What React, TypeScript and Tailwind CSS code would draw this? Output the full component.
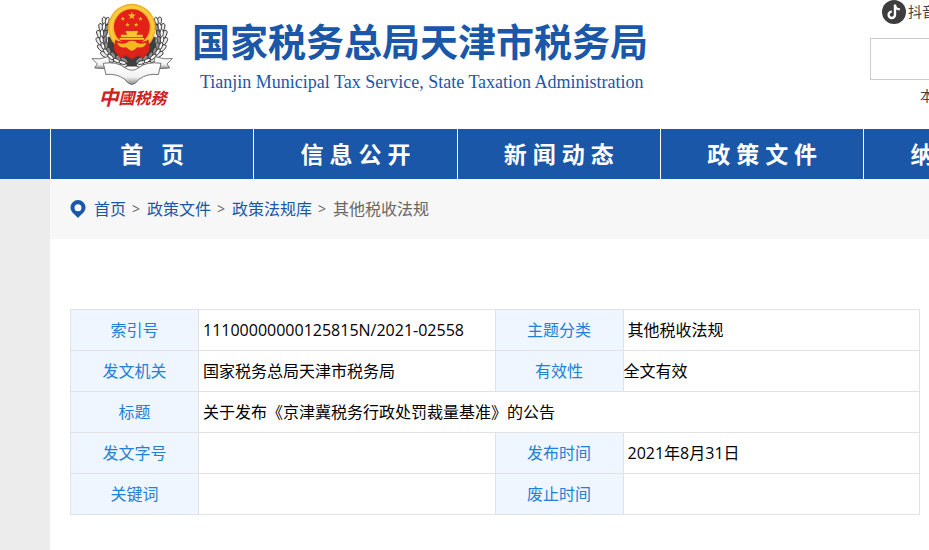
import { Fragment, type ReactNode } from "react"

// ─── Constants ───────────────────────────────────────────────────────────────
const NAV_ITEMS = [
  "首\u00a0\u00a0\u00a0页",
  "信 息 公 开",
  "新 闻 动 态",
  "政 策 文 件",
  "纳 税 服 务",
  "互 动 交 流",
]

const CRUMBS = ["首页", "政策文件", "政策法规库"]

// x, y, rotation of each ear on the left half of the wreath
const LEAVES = [
  [82, 62, 16],
  [72, 80, 8],
  [66, 99, 0],
  [65, 119, -8],
  [69, 138, -20],
  [78, 156, -34],
  [92, 171, -48],
  [110, 182, -62],
  [128, 188, -76],
]

const SMALL_STARS = [
  [129, 56],
  [182, 56],
  [143, 74],
  [169, 74],
]

// ─── Icons ───────────────────────────────────────────────────────────────────
function Wreath() {
  return (
    <g stroke="#2f2f2f" strokeWidth="2.500">
      {LEAVES.map(([x, y, r]) => (
        <g key={y} transform={`translate(${x} ${y}) rotate(${r})`}>
          <ellipse cx="-9" rx="6.500" ry="13" fill="#e8e8e8" transform="rotate(-24)" />
          <ellipse cx="9" rx="6.500" ry="13" fill="#8c8c8c" transform="rotate(24)" />
          <ellipse rx="5" ry="11" fill="#fbfbfb" />
        </g>
      ))}
    </g>
  )
}

function Star({ x, y, s }: { x: number; y: number; s: number }) {
  return (
    <path
      transform={`translate(${x} ${y}) scale(${s})`}
      d="M0-4 1-1.200 4-1.200 1.600.6 2.500 3.400 0 1.700-2.500 3.400-1.600.6-4-1.200-1-1.200Z"
      fill="#f9bd2c"
    />
  )
}

function Emblem() {
  return (
    <svg viewBox="33 6 250 252" className="h-[84px] w-[83px]" aria-hidden="true">
      <defs>
        <linearGradient id="silver" x1="0" x2="0" y1="0" y2="1">
          <stop offset="0" stopColor="#ffffff" />
          <stop offset="0.65" stopColor="#f3f3f3" />
          <stop offset="1" stopColor="#8a8a8a" />
        </linearGradient>
        <radialGradient id="gold">
          <stop offset="0.7" stopColor="#f0a818" />
          <stop offset="0.88" stopColor="#fcd045" />
          <stop offset="1" stopColor="#e9a51c" />
        </radialGradient>
      </defs>
      <path d="M84 110h144v60l-30 30h-84l-30-30Z" fill="#3f3f3f" />
      <Wreath />
      <g transform="translate(312 0) scale(-1 1)">
        <Wreath />
      </g>
      {/* red drapery under the ring */}
      <path d="M104 130h104v24l-16 20-18-6-18 10-18-10-18 6-16-20Z" fill="#d8201a" />
      <circle cx="156" cy="83" r="72" fill="url(#gold)" />
      <circle cx="156" cy="81" r="54" fill="#e32119" />
      <Star x={156} y={47} s={3} />
      {SMALL_STARS.map(([x, y]) => (
        <Star key={x} x={x} y={y} s={1.7} />
      ))}
      <path d="M138 93h36v6h-3v5h18v8h-66v-8h18v-5h-3ZM119 114h74v5h-74Z" fill="#fbc52e" />
      <path
        d="M106 118q8 10 50 10t50-10l4 26-18 24-18-6-18 12-18-12-18 6-18-24Z"
        fill="#dc241a"
      />
      <path
        d="M112 128q26 8 34-4 10-4 20 0 8 12 34 4-6 18-28 14-8 10-16 10t-16-10q-22 4-28-14Z"
        fill="#f6b822"
      />
      {/* ribbon */}
      <g stroke="#5c5c5c" strokeWidth="2.500" strokeLinejoin="round">
        <path d="M36 176q22 4 50-6l6 34q-20 4-48 0l8-12Z" fill="url(#silver)" />
        <path d="M278 176q-24 4-52-6l-6 34q22 4 50 0l-8-12Z" fill="url(#silver)" />
        <path
          d="M70 190q42-6 66 14 10 7 20 7t20-7q24-20 68-14l-8 34q-34-4-58 14-12 16-22 16t-22-16q-24-18-56-14Z"
          fill="url(#silver)"
        />
      </g>
    </svg>
  )
}

function PinIcon() {
  return (
    <svg viewBox="0 0 16 18" className="h-[18px] w-4 shrink-0" aria-hidden="true">
      <path
        fillRule="evenodd"
        d="M8 0a7.500 7.500 0 0 0-7.500 7.500c0 4.500 4.500 7 7.500 10.500 3-3.500 7.500-6 7.500-10.500A7.500 7.500 0 0 0 8 0Zm0 4.300a3.500 3.500 0 1 1 0 7 3.500 3.500 0 0 1 0-7Z"
        fill="#1a57a8"
      />
    </svg>
  )
}

function DouyinIcon() {
  return (
    <svg viewBox="0 0 24 24" className="size-6 shrink-0" aria-hidden="true">
      <circle cx="12" cy="12" r="12" fill="#3d3d3d" />
      <path
        d="M13 4.500v10.300a3.200 3.200 0 1 1-3.200-3.200M13 5c.2 2.500 2.100 4.300 4.900 4.400"
        fill="none"
        stroke="#fff"
        strokeWidth="2.400"
      />
    </svg>
  )
}

// ─── Sub-components ──────────────────────────────────────────────────────────
function LabelCell({ children }: { children: ReactNode }) {
  return (
    <th
      scope="row"
      className="h-[41px] border border-[#e2e2e2] bg-[#eff6ff] text-center font-normal text-[#2380d8]"
    >
      {children}
    </th>
  )
}

function ValueCell({ children }: { children?: ReactNode }) {
  return <td className="border border-[#e2e2e2] px-1">{children}</td>
}

function Header() {
  return (
    <header className="flex h-[129px] w-[1220px] shrink-0 items-start">
      <div className="ml-[41px] flex w-[83px] flex-col items-center pt-0.5">
        <Emblem />
        <p className="flex items-center text-base leading-6 font-bold text-[#d0201c] italic">
          <span className="text-xl leading-6">中</span>國税務
        </p>
      </div>

      <div className="ml-[18px] pt-4 text-[#1a57a8]">
        <h1 className="text-[38px] leading-[50px] font-bold">
          国家税务总局天津市税务局
        </h1>
        <p className="pt-1 pl-2 font-['Liberation_Serif',serif] text-lg leading-6">
          Tianjin Municipal Tax Service, State Taxation Administration
        </p>
      </div>

      {/* Social link + search */}
      <div className="ml-auto w-[400px] text-sm text-[#444]">
        <a href="#douyin" className="flex h-[23px] items-center gap-0.5 pl-3">
          <DouyinIcon />
          抖音
        </a>
        <input
          type="text"
          aria-label="搜索"
          className="mt-[15px] block h-[42px] w-full border border-[#ccc] bg-white px-3 outline-none"
        />
        <p className="mt-1 pl-[50px] leading-6">本站热词：</p>
      </div>
    </header>
  )
}

function Breadcrumb() {
  return (
    <nav
      aria-label="当前位置"
      className="flex h-[60px] items-center bg-[#f7f7f7] px-5"
    >
      <PinIcon />
      <div className="ml-2 flex items-center gap-1.5 text-[#666]">
        {CRUMBS.map((crumb) => (
          <Fragment key={crumb}>
            <a href={`#${crumb}`} className="text-[#1a57a8]">
              {crumb}
            </a>
            <span className="w-[9px] text-sm">&gt;</span>
          </Fragment>
        ))}
        <span>其他税收法规</span>
      </div>
    </nav>
  )
}

function InfoTable() {
  return (
    <table className="w-full table-fixed border-collapse text-black">
      <colgroup>
        <col className="w-32" />
        <col />
        <col className="w-32" />
        <col />
      </colgroup>
      <tbody>
        <tr>
          <LabelCell>索引号</LabelCell>
          <ValueCell>11100000000125815N/2021-02558</ValueCell>
          <LabelCell>主题分类</LabelCell>
          <ValueCell>其他税收法规</ValueCell>
        </tr>
        <tr>
          <LabelCell>发文机关</LabelCell>
          <ValueCell>国家税务总局天津市税务局</ValueCell>
          <LabelCell>有效性</LabelCell>
          <td className="border border-[#e2e2e2]">全文有效</td>
        </tr>
        <tr>
          <LabelCell>标题</LabelCell>
          <td colSpan={3} className="border border-[#e2e2e2] px-1">
            关于发布《京津冀税务行政处罚裁量基准》的公告
          </td>
        </tr>
        <tr>
          <LabelCell>发文字号</LabelCell>
          <ValueCell />
          <LabelCell>发布时间</LabelCell>
          <ValueCell>2021年8月31日</ValueCell>
        </tr>
        <tr>
          <LabelCell>关键词</LabelCell>
          <ValueCell />
          <LabelCell>废止时间</LabelCell>
          <ValueCell />
        </tr>
      </tbody>
    </table>
  )
}

// ─── Page ────────────────────────────────────────────────────────────────────
export default function App() {
  return (
    <div
      lang="zh-CN"
      className="flex min-h-screen flex-col overflow-hidden bg-[#ececec] font-['Open_Sans','Noto_Sans_CJK_SC',sans-serif] text-base"
    >
      <div className="flex bg-white pl-[50px]">
        <Header />
      </div>

      <nav aria-label="主导航" className="flex bg-[#1a57a8] pl-[50px]">
        <ul className="grid w-[1220px] shrink-0 grid-cols-6">
          {NAV_ITEMS.map((item) => (
            <li key={item} className="border-l border-white">
              <a
                href={`#${item}`}
                className="block text-center text-[23px] leading-[50px] font-bold text-white"
              >
                {item}
              </a>
            </li>
          ))}
        </ul>
      </nav>

      <main className="ml-[50px] flex-1 bg-white">
        <Breadcrumb />
        <div className="pt-[70px] pr-[9px] pb-9 pl-5">
          <InfoTable />
        </div>
      </main>
    </div>
  )
}
